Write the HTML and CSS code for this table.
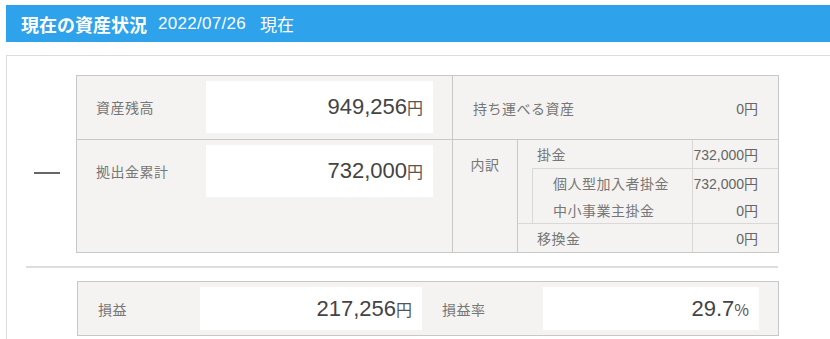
FILE: index.html
```html
<!DOCTYPE html>
<html lang="ja">
<head>
	<meta charset="utf-8">
	<title>現在の資産状況</title>
	<link rel="stylesheet" href="styles.css">
</head>
<body>
<div class="page">

	<h2 class="section-title">現在の資産状況<span class="as-of">2022/07/26</span><span class="as-of-suffix">現在</span></h2>

	<div class="panel">

		<!-- 資産残高 - 拠出金累計 -->
		<div class="calc-row">
			<div class="op"><span class="minus"></span></div>
			<div class="summary">
				<div class="cell-main cell-first">
					<span class="label">資産残高</span>
					<span class="value-box"><span class="num">949,256</span><span class="unit">円</span></span>
				</div>
				<div class="cell-side">
					<span class="label">持ち運べる資産</span>
					<span class="amount">0円</span>
				</div>
				<div class="cell-main">
					<span class="label">拠出金累計</span>
					<span class="value-box"><span class="num">732,000</span><span class="unit">円</span></span>
				</div>
				<div class="breakdown">
					<div class="bd-head label">内訳</div>
					<div class="bd-list">
						<div class="bd-row">
							<span class="bd-label label">掛金</span>
							<span class="bd-amount">732,000円</span>
						</div>
						<div class="bd-sub">
							<div class="bd-row">
								<span class="bd-label label">個人型加入者掛金</span>
								<span class="bd-amount">732,000円</span>
							</div>
							<div class="bd-row">
								<span class="bd-label label">中小事業主掛金</span>
								<span class="bd-amount">0円</span>
							</div>
						</div>
						<div class="bd-row bd-last">
							<span class="bd-label label">移換金</span>
							<span class="bd-amount">0円</span>
						</div>
					</div>
				</div>
			</div>
		</div>

		<hr class="divider">

		<!-- 損益 -->
		<div class="result">
			<span class="label">損益</span>
			<span class="value-box value-box-sm"><span class="num">217,256</span><span class="unit">円</span></span>
			<span class="label">損益率</span>
			<span class="value-box value-box-sm"><span class="num">29.7</span><span class="unit">%</span></span>
		</div>

	</div>
</div>
</body>
</html>
```

FILE: styles.css
```css
* {
	box-sizing: border-box;
}

html, body {
	margin: 0;
}

body {
	font-family: "Liberation Sans", "Noto Sans CJK JP", sans-serif;
	font-size: 14px;
	color: #666;
	background: #fff;
	overflow: hidden;
}

.page {
	width: 860px;
	padding: 5px 0 0 6px;
}

/* Blue title bar */
.section-title {
	margin: 0;
	height: 37px;
	padding-left: 15px;
	display: flex;
	align-items: center;
	background: #2ea2ea;
	color: #fff;
	font-family: "Noto Sans CJK JP", sans-serif;
	font-size: 18px;
	font-weight: bold;
}

.as-of {
	margin-left: 11px;
	font-family: "Liberation Sans", sans-serif;
	font-size: 17px;
	font-weight: normal;
	letter-spacing: 0.3px;
}

.as-of-suffix {
	margin-left: 14px;
	font-size: 17px;
	font-weight: normal;
}

/* White panel holding the tables */
.panel {
	width: 830px;
	margin-top: 13px;
	padding: 19px 0 12px 19px;
	border: 1px solid #ddd;
}

.label {
	font-family: "Noto Sans CJK JP", sans-serif;
	letter-spacing: 0.5px;
	color: #777;
}

.calc-row {
	display: flex;
}

.op {
	width: 50px;
	padding-top: 97px;
}

.minus {
	display: block;
	width: 26px;
	height: 2px;
	margin-left: 8px;
	background: #666;
}

.summary {
	width: 703px;
	display: grid;
	grid-template-columns: 376px 1fr;
	grid-template-rows: 64px 112px;
	border: 1px solid #c8c8c8;
	background: #f4f3f1;
}

.cell-main {
	display: flex;
	align-items: flex-start;
	padding: 5px 0 0 19px;
	border-right: 1px solid #c8c8c8;
}

.cell-first {
	border-bottom: 1px solid #c8c8c8;
}

.cell-main .label {
	width: 110px;
	line-height: 52px;
}

/* White number boxes */
.value-box {
	display: block;
	width: 227px;
	height: 52px;
	padding-right: 10px;
	background: #fff;
	text-align: right;
	font-size: 22px;
	line-height: 52px;
	white-space: nowrap;
}

.value-box .num {
	color: #444;
}

.value-box .unit {
	font-family: "Noto Sans CJK JP", sans-serif;
	font-size: 16px;
	line-height: 1;
	color: #555;
}

.cell-side {
	display: flex;
	justify-content: space-between;
	align-items: center;
	padding: 0 20px;
	border-bottom: 1px solid #c8c8c8;
}

.amount, .bd-amount {
	color: #666;
	white-space: nowrap;
}

/* 内訳 block */
.breakdown {
	display: grid;
	grid-template-columns: 65px 1fr;
}

.bd-head {
	border-right: 1px solid #c8c8c8;
	padding-top: 14px;
	line-height: 20px;
	text-align: center;
}

.bd-list {
	display: flex;
	flex-direction: column;
}

.bd-row {
	display: grid;
	grid-template-columns: 1fr 86px;
	height: 28px;
}

.bd-label {
	padding-left: 19px;
	align-self: center;
}

.bd-amount {
	display: flex;
	align-items: center;
	justify-content: flex-end;
	padding-right: 20px;
	border-left: 1px solid #d8d8d8;
}

.bd-sub {
	margin-left: 14px;
	border-top: 1px solid #d8d8d8;
	border-left: 1px solid #d8d8d8;
}

.bd-sub .bd-row {
	height: 27px;
}

.bd-sub .bd-label {
	padding-left: 20px;
}

.bd-last {
	height: 29px;
	border-top: 1px solid #d8d8d8;
}

.divider {
	width: 752px;
	height: 2px;
	margin: 13px 0;
	border: 0;
	background: #ddd;
}

/* 損益 row */
.result {
	width: 702px;
	margin-left: 51px;
	display: grid;
	grid-template-columns: 122px 222px 121px 216px;
	align-items: center;
	padding: 5px 0;
	border: 1px solid #c8c8c8;
	background: #f4f3f1;
}

.result .label {
	padding-left: 20px;
}

.value-box-sm {
	width: auto;
	height: 43px;
	line-height: 43px;
}
```
